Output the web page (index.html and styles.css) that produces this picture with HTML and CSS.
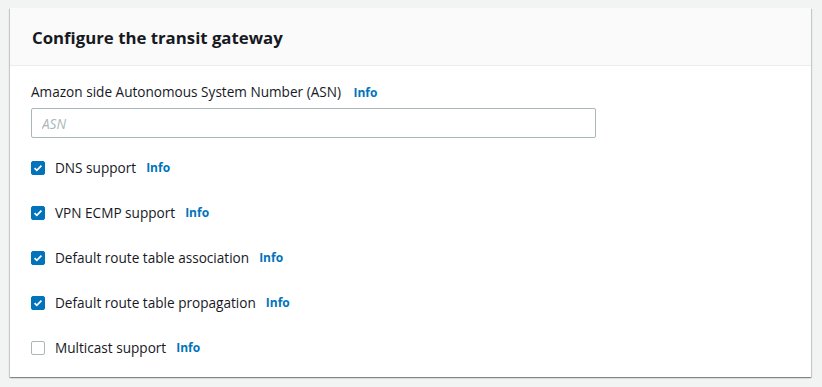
FILE: index.html
```html
<!DOCTYPE html>
<html lang="en">

<head>
    <meta charset="UTF-8">
    <meta name="viewport" content="width=device-width, initial-scale=1.0">
    <title>Configure the transit gateway</title>
    <link rel="stylesheet" href="styles.css">
</head>

<body>
    <div class="panel">
        <div class="panel-header">
            <h2>Configure the transit gateway</h2>
        </div>
        <div class="panel-body">
            <div class="field">
                <label class="field-label">Amazon side Autonomous System Number (ASN) <a class="info" href="#">Info</a></label>
                <input class="text-input" type="text" placeholder="ASN">
            </div>

            <label class="check-row">
                <span class="box checked"><svg viewBox="0 0 14 14"><path d="M3 7.2l2.6 2.6L11 4.2" /></svg></span>
                DNS support <a class="info" href="#">Info</a>
            </label>
            <label class="check-row">
                <span class="box checked"><svg viewBox="0 0 14 14"><path d="M3 7.2l2.6 2.6L11 4.2" /></svg></span>
                VPN ECMP support <a class="info" href="#">Info</a>
            </label>
            <label class="check-row">
                <span class="box checked"><svg viewBox="0 0 14 14"><path d="M3 7.2l2.6 2.6L11 4.2" /></svg></span>
                Default route table association <a class="info" href="#">Info</a>
            </label>
            <label class="check-row">
                <span class="box checked"><svg viewBox="0 0 14 14"><path d="M3 7.2l2.6 2.6L11 4.2" /></svg></span>
                Default route table propagation <a class="info" href="#">Info</a>
            </label>
            <label class="check-row">
                <span class="box"></span>
                Multicast support <a class="info" href="#">Info</a>
            </label>
        </div>
    </div>
</body>

</html>
```

FILE: styles.css
```css
body {
    margin: 0;
    padding: 8px 11px 10px 10px;
    background-color: #f2f3f3;
    font-family: 'Open Sans', 'Noto Sans', sans-serif;
    color: #16191f;
}

.panel {
    background-color: #fff;
    box-shadow: 0 1px 1px 0 rgba(0, 28, 36, 0.3), 1px 1px 1px 0 rgba(0, 28, 36, 0.15), -1px 1px 1px 0 rgba(0, 28, 36, 0.15);
}

.panel-header {
    background-color: #fafafa;
    border-bottom: 1px solid #eaeded;
    height: 57px;
    padding: 0 22px;
    display: flex;
    align-items: center;
}

.panel-header h2 {
    margin: 2px 0 0;
    font-size: 16.8px;
    font-weight: 700;
}

.panel-body {
    padding: 15px 21px 7px;
}

.field-label {
    display: block;
    font-size: 13.6px;
    line-height: 22px;
    margin-bottom: 4px;
}

.info {
    color: #0073bb;
    font-size: 12px;
    font-weight: 700;
    text-decoration: none;
    margin-left: 9px;
}

.text-input {
    display: block;
    box-sizing: border-box;
    width: 565px;
    height: 30px;
    margin: 0;
    padding: 0 10px;
    border: 1px solid #aab7b8;
    border-radius: 2px;
    font-family: inherit;
    font-size: 13.6px;
    color: #16191f;
}

.text-input::placeholder {
    color: #aab7b8;
    font-style: italic;
}

.check-row {
    display: flex;
    align-items: center;
    height: 45px;
    font-size: 13.6px;
}

.check-row:first-of-type {
    margin-top: 7px;
}

.check-row .info {
    margin-left: 10px;
}

.box {
    box-sizing: border-box;
    width: 14px;
    height: 14px;
    margin-right: 10px;
    border: 1px solid #aab7b8;
    border-radius: 2px;
    display: flex;
}

.box.checked {
    background-color: #0073bb;
    border-color: #0073bb;
}

.box svg {
    width: 12px;
    height: 12px;
    fill: none;
    stroke: #fff;
    stroke-width: 2;
}
```
